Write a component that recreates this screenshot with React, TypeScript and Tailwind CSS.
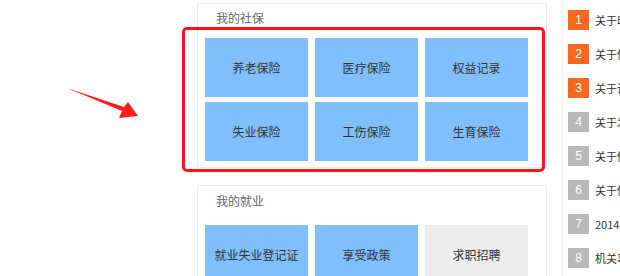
import React from 'react';

const cjk = "font-['Microsoft_YaHei','Noto_Sans_CJK_SC',sans-serif]";

const socialTiles = ['养老保险', '医疗保险', '权益记录', '失业保险', '工伤保险', '生育保险'];
const jobTiles = [
  { label: '就业失业登记证', active: true },
  { label: '享受政策', active: true },
  { label: '求职招聘', active: false },
];
const news = [
  '关于印发有关通知',
  '关于做好社会保险工作',
  '关于调整有关标准',
  '关于发布年度公告',
  '关于做好失业保险工作',
  '关于做好就业登记工作',
  '2014年度社会保险',
  '机关事业单位养老',
];

function Arrow() {
  return (
    <svg width="85" height="45" viewBox="0 0 85 45" className="block">
      <polygon points="7,8 64,27 68,22 78,36 59,38 62,31" fill="#ff1f1f" />
    </svg>
  );
}

export default function App() {
  return (
    <div className={`relative w-[620px] h-[276px] overflow-hidden bg-white flex ${cjk}`}>
      {/* left area with the annotation arrow */}
      <div className="w-[197px] shrink-0 pt-[80px] pl-[60px]">
        <Arrow />
      </div>

      {/* middle column */}
      <div className="w-[350px] shrink-0 flex flex-col pt-[3px] gap-[17px]">
        <div className="border border-[#ececec] bg-white">
          <div className="h-[34px] pl-[18px] pt-[5px] text-[12px] leading-[18px] text-[#666]">我的社保</div>
          <div className="grid grid-cols-[103px_103px_103px] gap-x-[7px] gap-y-[5px] pl-[7px] pb-[6px]">
            {socialTiles.map((t) => (
              <div
                key={t}
                className="h-[59px] bg-[#80bffc] flex items-center justify-center text-[12px] text-[#333]"
              >
                {t}
              </div>
            ))}
          </div>
        </div>

        <div className="border border-[#ececec] bg-white">
          <div className="h-[39px] pl-[18px] pt-[6px] text-[12px] leading-[18px] text-[#666]">我的就业</div>
          <div className="grid grid-cols-[103px_103px_103px] gap-x-[7px] pl-[7px] pb-[6px]">
            {jobTiles.map((t) => (
              <div
                key={t.label}
                className={`h-[59px] flex items-center justify-center text-[12px] text-[#333] ${
                  t.active ? 'bg-[#80bffc]' : 'bg-[#ececec]'
                }`}
              >
                {t.label}
              </div>
            ))}
          </div>
        </div>
      </div>

      {/* right news list */}
      <div className="ml-[15px] flex-1 border-l border-[#eeeeee] pl-[5px] pt-[10px] flex flex-col gap-[14px]">
        {news.map((n, i) => (
          <div key={i} className="flex items-center h-[20px]">
            <span
              className={`w-[21px] h-[20px] shrink-0 flex items-center justify-center text-white text-[12px] font-['Liberation_Sans',sans-serif] ${
                i < 3 ? 'bg-[#f66a1d]' : 'bg-[#b9b9b9]'
              }`}
            >
              {i + 1}
            </span>
            <span className="ml-[6px] whitespace-nowrap text-[11px] text-[#333]">{n}</span>
          </div>
        ))}
      </div>

      {/* red highlight annotation */}
      <div className="absolute left-[182px] top-[27px] w-[363px] h-[145px] border-[3px] border-[#ff1414] rounded-[5px] pointer-events-none" />
    </div>
  );
}
